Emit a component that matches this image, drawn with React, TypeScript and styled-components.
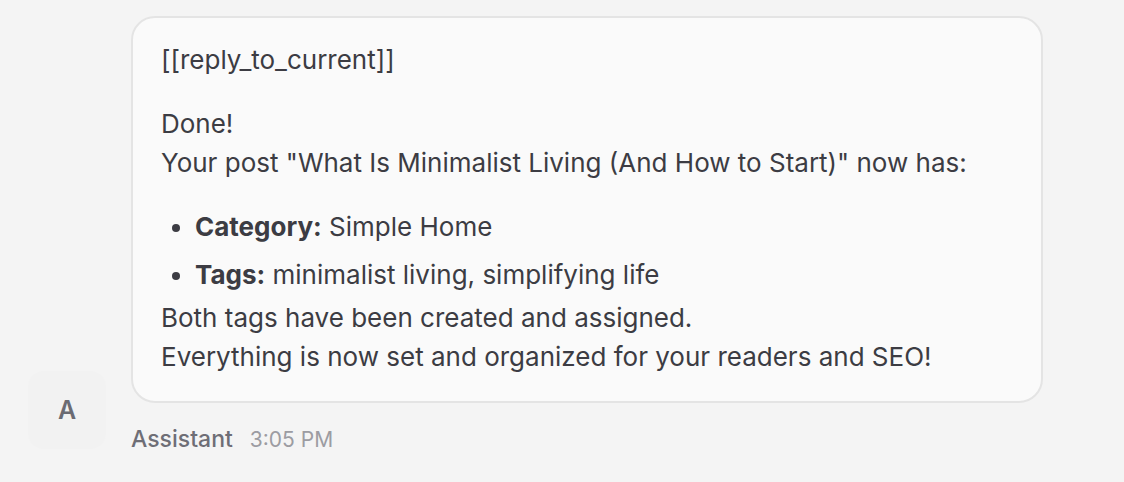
import styled, { createGlobalStyle } from 'styled-components'

const GlobalStyle = createGlobalStyle`
  html, body {
    margin: 0;
    padding: 0;
    background: #f4f4f4;
    font-family: Inter, "Noto Sans", sans-serif;
  }
`

const Page = styled.div`
  width: 1124px;
  height: 482px;
  box-sizing: border-box;
  padding: 16px 0 0 28px;
  background: #f4f4f4;
`

const MessageRow = styled.div`
  display: flex;
  align-items: flex-end;
  gap: 25px;
`

const Avatar = styled.div`
  width: 78px;
  height: 78px;
  flex-shrink: 0;
  margin-bottom: 4px;
  border-radius: 16px;
  background: #f2f2f2;
  display: flex;
  align-items: center;
  justify-content: center;
  color: #6b6b73;
  font-size: 25px;
  font-weight: 600;
`

const Column = styled.div`
  display: flex;
  flex-direction: column;
  gap: 23px;
`

const Bubble = styled.div`
  width: 912px;
  box-sizing: border-box;
  padding: 22px 30px 25px 28px;
  background: #fafafa;
  border: 2px solid #e4e4e4;
  border-radius: 24px;
  color: #3c3c43;
  font-size: 26px;
  line-height: 39px;
`

const Paragraph = styled.p`
  margin: 0 0 25px;
`

const List = styled.ul`
  margin: 0;
  padding-left: 34px;
  list-style: disc;

  li + li {
    margin-top: 9px;
  }
`

const Item = styled.li`
  padding-left: 0;
`

const Label = styled.strong`
  font-weight: 700;
`

const TrailingText = styled.div`
  margin-top: 4px;
`

const Meta = styled.div`
  display: flex;
  align-items: baseline;
  gap: 17px;
  font-size: 23px;
  line-height: 26px;
`

const Author = styled.span`
  color: #6e6e76;
  font-weight: 500;
`

const Time = styled.span`
  color: #9c9ca2;
  font-size: 21px;
`

export default function App() {
  return (
    <Page>
      <GlobalStyle />
      <MessageRow>
        <Avatar>A</Avatar>
        <Column>
          <Bubble>
            <Paragraph>[[reply_to_current]]</Paragraph>
            <Paragraph>
              Done!
              <br />
              Your post "What Is Minimalist Living (And How to Start)" now has:
            </Paragraph>
            <List>
              <Item>
                <Label>Category:</Label> Simple Home
              </Item>
              <Item>
                <Label>Tags:</Label> minimalist living, simplifying life
              </Item>
            </List>
            <TrailingText>
              Both tags have been created and assigned.
              <br />
              Everything is now set and organized for your readers and SEO!
            </TrailingText>
          </Bubble>
          <Meta>
            <Author>Assistant</Author>
            <Time>3:05 PM</Time>
          </Meta>
        </Column>
      </MessageRow>
    </Page>
  )
}
